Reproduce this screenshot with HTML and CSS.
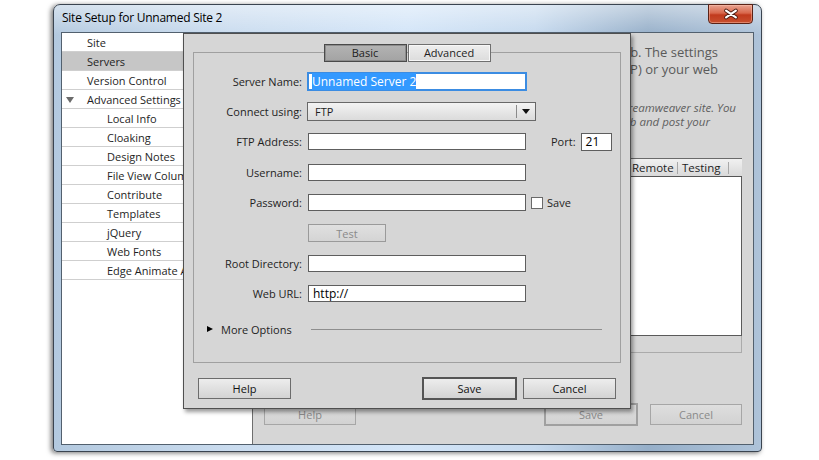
FILE: index.html
```html
<!DOCTYPE html>
<html lang="en">
<head>
    <meta charset="UTF-8">
    <title>Site Setup for Unnamed Site 2</title>
    <link rel="stylesheet" href="styles.css">
</head>
<body>

    <div class="window">
        <div class="titlebar">
            <span class="title">Site Setup for Unnamed Site 2</span>
            <button class="close-btn">
                <svg width="45" height="20" viewBox="0 0 45 20">
                    <path d="M18.5 6.5 L28.5 13.5 M28.5 6.5 L18.5 13.5" stroke="#4a1a10" stroke-width="4" stroke-linecap="round" fill="none"/>
                    <path d="M18.5 6.5 L28.5 13.5 M28.5 6.5 L18.5 13.5" stroke="#fff" stroke-width="2.2" stroke-linecap="round" fill="none"/>
                </svg>
            </button>
        </div>

        <div class="client">
            <ul class="category-list">
                <li>Site</li>
                <li class="selected">Servers</li>
                <li>Version Control</li>
                <li class="group"><span class="down-arrow"></span>Advanced Settings</li>
                <li class="sub">Local Info</li>
                <li class="sub">Cloaking</li>
                <li class="sub">Design Notes</li>
                <li class="sub">File View Columns</li>
                <li class="sub">Contribute</li>
                <li class="sub">Templates</li>
                <li class="sub">jQuery</li>
                <li class="sub">Web Fonts</li>
                <li class="sub">Edge Animate Assets</li>
            </ul>

            <div class="servers-panel">
                <!-- the left part of this text sits under the dialog -->
                <div class="intro">
                    <span>web. The settings</span>
                    <span>(ISP) or your web</span>
                </div>
                <div class="note">
                    <span>Dreamweaver site. You</span>
                    <span class="short">web and post your</span>
                </div>

                <div class="server-table">
                    <div class="table-head">
                        <span class="col-name"></span>
                        <span class="col-address"></span>
                        <span class="col-conn"></span>
                        <span class="col-remote">Remote</span>
                        <span class="col-testing">Testing</span>
                        <span class="col-end"></span>
                    </div>
                    <div class="table-body"></div>
                    <div class="table-foot"></div>
                </div>

                <div class="panel-buttons">
                    <button class="btn-off">Help</button>
                    <div class="right-btns">
                        <button class="btn-off default">Save</button>
                        <button class="btn-off">Cancel</button>
                    </div>
                </div>
            </div>
        </div>
    </div>

    <!-- server settings dialog, on top of the site setup window -->
    <div class="server-dialog">
        <div class="groupbox">
            <div class="tabs">
                <span class="tab active">Basic</span>
                <span class="tab">Advanced</span>
            </div>

            <div class="server-form">
                <label>Server Name:</label>
                <div class="input focused"><span class="sel-text">Unnamed Server 2</span></div>
                <span></span>

                <label>Connect using:</label>
                <div class="select"><span class="select-value">FTP</span><span class="select-btn"><i></i></span></div>
                <span></span>

                <label>FTP Address:</label>
                <div class="input"></div>
                <div class="port"><span>Port:</span><div class="input port-input">21</div></div>

                <label>Username:</label>
                <div class="input"></div>
                <span></span>

                <label>Password:</label>
                <div class="input"></div>
                <div class="save-pass"><span class="checkbox"></span>Save</div>

                <span></span>
                <div><button class="test-btn">Test</button></div>
                <span></span>

                <label>Root Directory:</label>
                <div class="input"></div>
                <span></span>

                <label>Web URL:</label>
                <div class="input">http://</div>
                <span></span>
            </div>

            <div class="more-options">
                <span class="right-arrow"></span>
                <span>More Options</span>
                <span class="rule"></span>
            </div>
        </div>

        <div class="dialog-buttons">
            <button class="btn">Help</button>
            <div class="right-btns">
                <button class="btn default">Save</button>
                <button class="btn">Cancel</button>
            </div>
        </div>
    </div>

</body>
</html>
```

FILE: styles.css
```css
* {
    margin: 0;
    padding: 0;
    box-sizing: border-box;
}

body {
    position: relative;
    width: 819px;
    height: 460px;
    overflow: hidden;
    background-color: #fff;
    font-family: "Open Sans", "Liberation Sans", sans-serif;
    font-size: 11px;
    color: #1e1e1e;
}

button {
    font-family: inherit;
    font-size: 11px;
}

/* ---- window frame ---- */

.window {
    display: flex;
    flex-direction: column;
    width: 709px;
    height: 448px;
    margin: 4px 0 0 53px;
    border: 1px solid #3a4450;
    border-radius: 7px 7px 4px 4px;
    background: linear-gradient(180deg, rgba(255, 255, 255, 0.45) 0px, rgba(255, 255, 255, 0) 30px),
                linear-gradient(90deg, #b3c9df 0%, #cadcef 25%, #d3e5f8 50%, #c5d9ee 68%, #96afc9 84%, #aec3d9 100%);
    box-shadow: -2px 1px 5px rgba(0, 0, 0, 0.55);
}

.titlebar {
    height: 28px;
    display: flex;
    justify-content: space-between;
    align-items: flex-start;
    padding-left: 8px;
}

.title {
    margin-top: 5px;
    font-size: 12px;
    line-height: 16px;
    letter-spacing: -0.25px;
    color: #000;
}

.close-btn {
    width: 45px;
    height: 20px;
    margin: -1px 8px 0 0;
    border: 1px solid #5a2216;
    border-radius: 0 0 4px 4px;
    background: linear-gradient(180deg, #e9a391 0%, #d8674b 45%, #c13a1d 55%, #c8502f 100%);
    box-shadow: inset 0 0 0 1px rgba(255, 200, 180, 0.45);
    display: flex;
}

.close-btn svg {
    margin: -1px 0 0 -1px;
}

.client {
    display: flex;
    height: 411px;
    margin: 0 8px;
    background-color: #d6d6d6;
    box-shadow: 0 0 0 1px #52606e;
}

/* ---- category list ---- */

.category-list {
    width: 191px;
    list-style: none;
    background-color: #fff;
    border-right: 1px solid #6e6e6e;
    overflow: hidden;
}

.category-list li {
    height: 19px;
    line-height: 18px;
    padding: 1px 0 0 25px;
    border-bottom: 1px solid #cfcfcf;
    white-space: nowrap;
}

.category-list li.selected {
    background-color: #c6c6c6;
}

.category-list li.group {
    padding-left: 4px;
}

.category-list li.sub {
    padding-left: 45px;
}

.down-arrow {
    display: inline-block;
    width: 0;
    height: 0;
    margin-right: 13px;
    vertical-align: 1px;
    border-left: 4px solid transparent;
    border-right: 4px solid transparent;
    border-top: 6px solid #6b6b6b;
}

/* ---- servers panel (under the dialog) ---- */

.servers-panel {
    flex: 1;
    display: flex;
    flex-direction: column;
    padding: 0 11px;
}

.intro,
.note {
    display: flex;
    flex-direction: column;
    align-items: flex-end;
    white-space: nowrap;
}

.intro {
    margin-top: 11px;
    padding-right: 24px;
    font-size: 13px;
    line-height: 17px;
    color: #5a5a5a;
}

.note {
    margin-top: 23px;
    padding-right: 6px;
    font-size: 11.5px;
    line-height: 14px;
    font-style: italic;
    color: #606060;
}

.note .short {
    margin-right: 26px;
}

.server-table {
    margin-top: 29px;
}

.table-head {
    display: flex;
    height: 19px;
    padding: 3px 0 2px;
    background: linear-gradient(180deg, #f1f1f1, #d9d9d9);
    border-top: 1px solid #6a6a6a;
    border-bottom: 1px solid #555;
    font-size: 11.5px;
    line-height: 12px;
}

.table-head span {
    padding-left: 4px;
    border-right: 1px solid #a8a8a8;
    white-space: nowrap;
}

.col-name { width: 130px; }
.col-address { width: 130px; }
.col-conn { width: 104px; }
.col-remote { width: 50px; }
.col-testing { width: 51px; }
.col-end { flex: 1; border-right: none !important; }

.table-body {
    height: 159px;
    background-color: #fff;
    border-right: 1px solid #5a5a5a;
    border-bottom: 1px solid #5a5a5a;
}

.table-foot {
    height: 17px;
    border-right: 1px solid #ababab;
    border-bottom: 1px solid #ababab;
}

.panel-buttons {
    display: flex;
    justify-content: space-between;
    align-items: center;
    margin-top: 50px;
}

.right-btns {
    display: flex;
    align-items: center;
    gap: 6px;
}

.btn-off {
    width: 92px;
    height: 21px;
    border: 1px solid #a6a6a6;
    background: linear-gradient(180deg, #dedede, #d2d2d2);
    color: #8a8a8a;
}

.btn-off.default {
    width: 94px;
    height: 23px;
    border: 2px solid #a0a0a0;
}

.panel-buttons .right-btns {
    gap: 12px;
}

/* ---- server dialog ---- */

.server-dialog {
    position: absolute;
    left: 183px;
    top: 33px;
    width: 448px;
    height: 376px;
    background-color: #d6d6d6;
    border: 1px solid #4f4f4f;
    box-shadow: 2px 3px 4px rgba(0, 0, 0, 0.4);
}

.groupbox {
    height: 311px;
    margin: 18px 9px 0;
    border: 1px solid #a0a0a0;
}

.tabs {
    display: flex;
    justify-content: center;
    gap: 1px;
    margin-top: -9px;
}

.tab {
    width: 83px;
    height: 18px;
    line-height: 16px;
    text-align: center;
    border: 1px solid #6f6f6f;
    background: linear-gradient(180deg, #eeeeee, #dcdcdc);
    box-shadow: inset 0 0 0 1px #f7f7f7;
}

.tab.active {
    border-color: #4a4a4a;
    background: linear-gradient(180deg, #b3b3b3, #a3a3a3);
    box-shadow: inset 0 0 0 1px #8c8c8c;
}

.server-form {
    display: grid;
    grid-template-columns: 108px 218px 1fr;
    grid-auto-rows: 30.4px;
    column-gap: 6px;
    align-items: center;
    margin-top: 4px;
}

.server-form label {
    text-align: right;
    white-space: nowrap;
}

.input {
    height: 17px;
    padding-left: 4px;
    border: 1px solid #5e5e5e;
    background-color: #fff;
    font-size: 12px;
    line-height: 15px;
    color: #000;
}

.input.focused {
    width: 220px;
    height: 19px;
    margin-left: -1px;
    border: 2px solid #3b8ce2;
    padding-left: 3px;
}

.sel-text {
    background-color: #3399ff;
    color: #fff;
}

.select {
    display: flex;
    width: 229px;
    height: 19px;
    margin-left: -1px;
    border: 1px solid #686868;
    background: linear-gradient(180deg, #f3f3f3, #dbdbdb);
    font-size: 11px;
    line-height: 17px;
}

.select-value {
    flex: 1;
    padding-left: 7px;
}

.select-btn {
    width: 19px;
    display: flex;
    justify-content: center;
    align-items: center;
    border-left: 1px solid #8a8a8a;
    margin: 2px 0;
}

.select-btn i {
    width: 0;
    height: 0;
    border-left: 4px solid transparent;
    border-right: 4px solid transparent;
    border-top: 5px solid #111;
}

.port {
    display: flex;
    align-items: center;
    margin-left: 19px;
}

.port-input {
    width: 31px;
    height: 18px;
    margin-left: 5px;
}

.save-pass {
    display: flex;
    align-items: center;
    margin-left: -1px;
}

.checkbox {
    width: 12px;
    height: 12px;
    margin-right: 4px;
    border: 1px solid #6a6a6a;
    background-color: #fff;
}

.test-btn {
    width: 78px;
    height: 18px;
    border: 1px solid #9a9a9a;
    background: linear-gradient(180deg, #e0e0e0, #d4d4d4);
    color: #8a8a8a;
}

.more-options {
    display: flex;
    align-items: center;
    height: 20px;
    margin-top: 10px;
    padding: 0 18px 0 13px;
}

.right-arrow {
    width: 0;
    height: 0;
    margin-right: 8px;
    border-top: 3.5px solid transparent;
    border-bottom: 3.5px solid transparent;
    border-left: 6px solid #000;
}

.rule {
    width: 291px;
    height: 1px;
    margin-left: auto;
    background-color: #8e8e8e;
}

.dialog-buttons {
    display: flex;
    justify-content: space-between;
    align-items: center;
    height: 23px;
    margin-top: 14px;
    padding: 0 14px;
}

.btn {
    width: 93px;
    height: 21px;
    border: 1px solid #6c6c6c;
    background: linear-gradient(180deg, #ededed, #d3d3d3);
    color: #111;
}

.btn.default {
    width: 95px;
    height: 23px;
    border: 2px solid #555;
}
```
